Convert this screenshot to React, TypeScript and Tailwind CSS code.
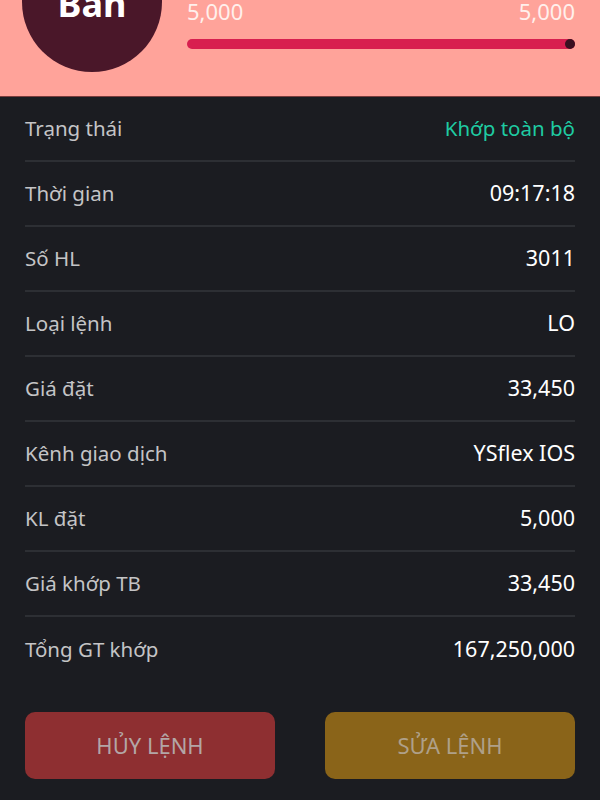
const rows: { label: string; value: string; accent?: boolean }[] = [
  { label: "Trạng thái", value: "Khớp toàn bộ", accent: true },
  { label: "Thời gian", value: "09:17:18" },
  { label: "Số HL", value: "3011" },
  { label: "Loại lệnh", value: "LO" },
  { label: "Giá đặt", value: "33,450" },
  { label: "Kênh giao dịch", value: "YSflex IOS" },
  { label: "KL đặt", value: "5,000" },
  { label: "Giá khớp TB", value: "33,450" },
  { label: "Tổng GT khớp", value: "167,250,000" },
];

const App = () => {
  return (
    <div className="w-[600px] h-[800px] overflow-hidden bg-[#1b1c21] font-['Noto_Sans',sans-serif]">
      <section className="h-[97px] bg-[#ffa39a] overflow-hidden flex border-b border-[#7a3c3c]">
        <div className="ml-[22px] mt-[-68px] w-[140px] h-[140px] shrink-0 rounded-full bg-[#4a1729] flex justify-center">
          <span className="mt-[54px] text-white text-[36px] font-bold leading-none">Bán</span>
        </div>
        <div className="ml-[25px] mr-[25px] flex-1 flex flex-col">
          <div className="flex justify-between text-[#fff0ec] text-[22px] leading-none">
            <span>5,000</span>
            <span>5,000</span>
          </div>
          <div className="mt-[17px] h-[10px] rounded-full bg-[#d81f4f] flex justify-end">
            <span className="w-[10px] h-[10px] rounded-full bg-[#3a1020]"></span>
          </div>
        </div>
      </section>
      <div className="px-[25px]">
        {rows.map((r, i) => (
          <div
            key={r.label}
            className={`h-[65px] flex items-center justify-between ${
              i < rows.length - 1 ? "border-b-2 border-[#2d2f34]" : ""
            }`}
          >
            <span className="text-[#c4c4c6] text-[20.5px]">{r.label}</span>
            <span className={r.accent ? "text-[#1fcba2] text-[20.5px]" : "text-white text-[21.5px]"}>
              {r.value}
            </span>
          </div>
        ))}
        <div className="mt-[30px] grid grid-cols-2 gap-[50px]">
          <button className="h-[67px] rounded-[10px] bg-[#8e2f31] text-[#b3a6a6] text-[22px]">
            HỦY LỆNH
          </button>
          <button className="h-[67px] rounded-[10px] bg-[#8a6419] text-[#afa089] text-[22px]">
            SỬA LỆNH
          </button>
        </div>
      </div>
    </div>
  );
};

export default App;
